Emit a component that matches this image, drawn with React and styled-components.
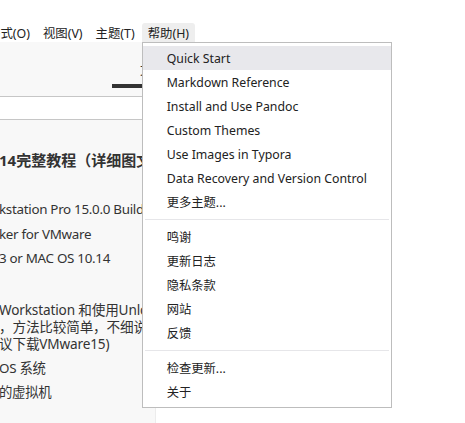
import styled, { createGlobalStyle } from 'styled-components'

const GlobalStyle = createGlobalStyle`
  html, body {
    margin: 0;
    padding: 0;
    background: #ffffff;
  }
  body {
    font-family: "Noto Sans", "Noto Sans CJK SC", sans-serif;
    overflow: hidden;
  }
`

const menus = ['格式(O)', '视图(V)', '主题(T)']

const helpGroups = [
  [
    'Quick Start',
    'Markdown Reference',
    'Install and Use Pandoc',
    'Custom Themes',
    'Use Images in Typora',
    'Data Recovery and Version Control',
    '更多主题...',
  ],
  ['鸣谢', '更新日志', '隐私条款', '网站', '反馈'],
  ['检查更新...', '关于'],
]

export default function App() {
  return (
    <Page>
      <GlobalStyle />
      <MenuBar>
        {menus.map((label) => (
          <MenuButton key={label}>{label}</MenuButton>
        ))}
        <MenuButton $open>
          帮助(H)
          <Dropdown>
            {helpGroups.map((group, i) => (
              <Group key={i}>
                {i > 0 && <Separator />}
                {group.map((item, j) => (
                  <DropdownItem key={item} $hover={i === 0 && j === 0}>
                    {item}
                  </DropdownItem>
                ))}
              </Group>
            ))}
          </Dropdown>
        </MenuButton>
      </MenuBar>

      <Body>
        <Sidebar>
          <SidebarHeader>
            <Tab>
              <TabLabel>文件</TabLabel>
            </Tab>
          </SidebarHeader>
          <SearchRow />
          <Outline>
            <Heading>14完整教程（详细图文）</Heading>
            <ListLine $first>kstation Pro 15.0.0 Build 10134415</ListLine>
            <ListLine>ker for VMware</ListLine>
            <ListLine>3 or MAC OS 10.14</ListLine>
            <Paragraph>
              <ParaLine>Workstation 和使用Unlocker</ParaLine>
              <ParaLine>，方法比较简单，不细说</ParaLine>
              <ParaLine>议下载VMware15)</ParaLine>
            </Paragraph>
            <ListLine $after>OS 系统</ListLine>
            <ListLine>的虚拟机</ListLine>
          </Outline>
        </Sidebar>
        <Editor />
      </Body>
    </Page>
  )
}

const Page = styled.div`
  display: flex;
  flex-direction: column;
  height: 100vh;
  background: #ffffff;
`

const MenuBar = styled.div`
  display: flex;
  gap: 1px;
  height: 19px;
  margin-top: 23px;
  margin-left: -18px;
  font-size: 12.4px;
  color: #222;
`

const MenuButton = styled.div`
  position: relative;
  padding: 0 6px;
  line-height: 21px;
  white-space: nowrap;
  border-radius: 3px 3px 0 0;
  background: ${({ $open }) => ($open ? '#eeeeee' : 'transparent')};
`

const Dropdown = styled.div`
  position: absolute;
  top: 19px;
  left: 0;
  z-index: 10;
  width: 248px;
  padding: 3px 0;
  background: #ffffff;
  border: 1px solid #bdbdbd;
  line-height: normal;
`

const Group = styled.div`
  display: flex;
  flex-direction: column;
`

const Separator = styled.div`
  height: 1px;
  margin: 5px 2px;
  background: #e6e6e9;
`

const DropdownItem = styled.div`
  display: flex;
  align-items: center;
  height: 24px;
  padding-left: 24px;
  font-size: 12.3px;
  color: #222;
  background: ${({ $hover }) => ($hover ? '#e8e8ec' : 'transparent')};
`

const Body = styled.div`
  flex: 1;
  display: flex;
  min-height: 0;
`

const Sidebar = styled.div`
  display: flex;
  flex-direction: column;
  width: 155px;
  background: #f8f8f8;
  border-right: 1px solid #ececec;
  overflow: hidden;
`

const SidebarHeader = styled.div`
  display: flex;
  align-items: flex-end;
  height: 55px;
  padding: 0 0 8px 112px;
  box-sizing: border-box;
  border-bottom: 1px solid #c6c6c6;
`

const Tab = styled.div`
  width: 64px;
  flex-shrink: 0;
  border-bottom: 4px solid #333;
`

const TabLabel = styled.div`
  padding: 0 0 6px 28px;
  font-size: 13px;
  color: #333;
  white-space: nowrap;
`

const SearchRow = styled.div`
  height: 22px;
  background: #ffffff;
  border-bottom: 1px solid #c6c6c6;
`

const Outline = styled.div`
  flex: 1;
  padding-top: 29px;
  color: #333;
  white-space: nowrap;
`

const Heading = styled.div`
  font-size: 15px;
  font-weight: bold;
  line-height: 22px;
  margin-left: -1px;
`

const ListLine = styled.div`
  font-size: 13.4px;
  letter-spacing: -0.3px;
  line-height: 24.5px;
  margin-top: ${({ $first, $after }) => ($first ? '26px' : $after ? '4px' : '0')};
  margin-left: -1px;
`

const Paragraph = styled.div`
  margin-top: 30px;
  margin-left: -1px;
`

const ParaLine = styled.div`
  font-size: 13.6px;
  letter-spacing: -0.15px;
  line-height: 17px;
`

const Editor = styled.div`
  flex: 1;
  background: #ffffff;
`
